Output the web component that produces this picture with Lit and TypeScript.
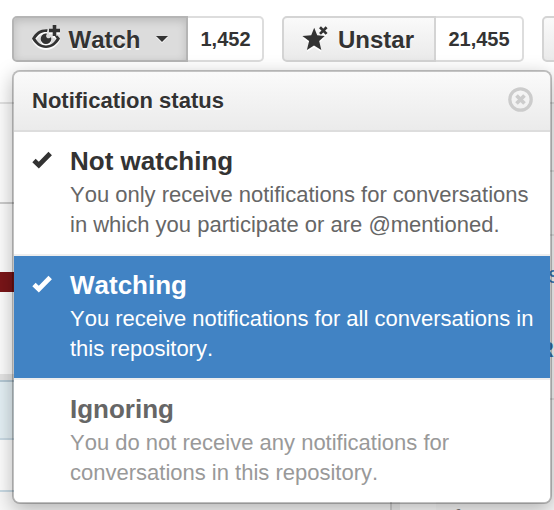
import { LitElement, html, css, svg, nothing } from "lit";
import { customElement, property } from "lit/decorators.js";
import { classMap } from "lit/directives/class-map.js";

const eye = html`<svg width="29" height="25" viewBox="0 0 29 25" fill="currentColor">
  <path fill-rule="evenodd" d="M0 13.600C3.200 7.300 8 4.200 14.400 4.200l1.200.1-.6 2.700-1-.1C9.400 6.900 6 9.600 3.400 13.600c2.600 4.500 6.200 6.900 10.600 6.900s8-2.400 10.600-6.900l-1.700-2.400 2.500-.8 2.600 3.200c-3.200 6-8 9.400-14 9.400S3.200 19.600 0 13.600z"/>
  <path d="M13.600 8.500a5.300 5.300 0 1 0 5.700 5.700c0-.9-.2-1.600-.5-2.300-1 1.900-3.800 1.900-4.400.1-.4-1.300-.2-2.600.7-3.300-.5-.2-1-.2-1.500-.2z"/>
  <path d="M20.700 0h3.600v3.800H28v3.500h-3.700V11h-3.600V7.300H17V3.800h3.700z"/></svg>`;

const star = html`<svg width="26" height="25" viewBox="0 0 26 25" fill="currentColor">
  <path d="M12.200 1.700l3 7.600 7.500.6-5.500 5.200 2.100 8.800-7.300-4.300-7.100 4.300 2.200-8.800L.4 10l8.800-.7z"/>
  <path d="M18 1.300l6.600 6.600M24.600 1.300L18 7.900" stroke="currentColor" stroke-width="2.700" fill="none"/></svg>`;

const check = html`<svg width="22" height="18" viewBox="0 0 22 18"><path d="M2 9.500l4.800 4.700L18.200 2.500" fill="none" stroke="currentColor" stroke-width="4.800"/></svg>`;

@customElement("social-button")
class SocialButton extends LitElement {
  @property() label = "";
  @property() count = "";
  @property() icon = "";
  @property({ type: Boolean }) active = false;
  static styles = css`
    :host { display: flex; height: 46px; box-sizing: border-box; flex: none; }
    * { box-sizing: border-box; }
    .button { display: flex; align-items: center; height: 46px; border: 2px solid #d4d4d4; border-radius: 5px 0 0 5px;
      background: linear-gradient(#fafafa, #eaeaea); color: #333; font-weight: bold; font-size: 24px; text-shadow: 0 2px 0 rgba(255,255,255,.9); }
    .button svg { filter: drop-shadow(0 2px 0 rgba(255,255,255,.9)); display: block; }
    .watch { width: 176px; padding-left: 18px; }
    .watch svg { margin-top: -4px; }
    .star { width: 154px; padding-left: 18px; }
    .star svg { margin-top: -1px; }
    .label { padding-top: 1px; }
    .active { background: #dcdcdc; border-color: #b5b5b5; box-shadow: inset 0 3px 8px rgba(0,0,0,.15); }
    .watch .label { margin-left: 7.500px; }
    .star .label { margin-left: 10px; }
    .caret { width: 0; height: 0; margin-left: 15.500px; border: 6px solid transparent; border-top-color: #333; border-bottom: 0; filter: drop-shadow(0 1px 0 #fff); }
    .count { display: flex; align-items: center; justify-content: center; height: 46px; border: 2px solid #ddd; border-left: 0;
      border-radius: 0 5px 5px 0; background: #fff; color: #333; font-size: 20px; font-weight: bold; }
    .watch + .count { width: 76px; padding-left: 1px; }
    .star + .count { width: 88px; }
  `;
  render() {
    const watch = this.icon === "eye";
    return html`<div class=${classMap({ button: true, watch, star: !watch, active: this.active })}>
        ${watch ? eye : star}<span class="label">${this.label}</span>
        ${watch ? html`<span class="caret"></span>` : nothing}
      </div><div class="count">${this.count}</div>`;
  }
}

@customElement("status-option")
class StatusOption extends LitElement {
  @property() heading = "";
  @property({ attribute: false }) lines: string[] = [];
  @property() kind = "";
  static styles = css`
    :host { display: block; }
    .option { display: grid; grid-template-columns: 38px 1fr; height: 124px; box-sizing: border-box; padding: 13px 0 0 18px;
      background: #fff; color: #333; border-bottom: 2px solid #eee; }
    .option svg { display: block; margin-top: 6px; }
    .title { font-size: 26px; line-height: 32px; font-weight: bold; }
    .text { font-size: 22px; line-height: 30px; color: #666; white-space: nowrap; padding-top: 3px; }
    .selected { background: #4183c4; color: #fff; }
    .selected .text { color: #fff; }
    .muted { height: 122px; border: 0; color: #666; }
    .muted .text { color: #999; }
  `;
  render() {
    return html`<div class="option ${this.kind}"><div>${this.kind === "muted" ? nothing : check}</div>
      <div><div class="title">${this.heading}</div><div class="text">${this.lines.map((l) => html`<div>${l}</div>`)}</div></div></div>`;
  }
}

@customElement("app-root")
class AppRoot extends LitElement {
  static styles = css`
    :host { display: block; position: relative; width: 554px; height: 510px; overflow: hidden; background: #fff;
      font-family: "Liberation Sans", Arial, sans-serif; font-kerning: none; }
    * { box-sizing: border-box; }
    .bar { display: flex; gap: 18px; padding: 16px 0 0 12px; height: 102px; align-items: flex-start; }
    .next { flex: none; width: 60px; height: 46px; border: 2px solid #d4d4d4; border-radius: 5px; background: linear-gradient(#fafafa, #eaeaea); }
    .page { display: flex; justify-content: space-between; height: 408px; border-top: 2px solid #e2e2e2; background: #fdfdfd; }
    .left { width: 390px; }
    .a { height: 100px; border-bottom: 2px solid #ccc; }
    .b { height: 68px; }
    .red { height: 20px; background: #7a1518; }
    .c { height: 82px; }
    .d { height: 6px; background: #e4e4e4; }
    .blue { height: 60px; background: #e4f0f5; border: solid #b5c9d5; border-width: 2px 0; border-bottom-color: #c9dae4; }
    .e { height: 52px; border-bottom: 2px solid #c9dae4; }
    .f { height: 18px; background: #f8f8f8; }
    .rule { width: 10px; border-left: 2px solid #d0d0d0; background: #eee; }
    .gap { width: 36px; }
    .right { width: 118px; background: #f8f8f8; color: #4183c4; font-size: 22px; text-align: right; }
    .right div { border-bottom: 2px solid #e2e2e2; }
    .r1 { height: 68px; }
    .r2 { height: 64px; }
    .r3 { height: 164px; padding: 26px 0 0; line-height: 26px; }
    .r3 span { display: block; height: 75px; margin-right: -6px; font-size: 24px; }
    .r3 b { display: block; margin-right: 0; }
    .right .r4 { padding: 106px 0 0 18px; text-align: left; color: #777; line-height: 24px; border: 0; }
    .panel { position: absolute; left: 12px; top: 70px; width: 540px; height: 434px; border: 2px solid rgba(0,0,0,.23);
      background: #fff; background-clip: padding-box; border-radius: 8px; box-shadow: 0 6px 20px rgba(0,0,0,.28); }
    .clip { overflow: hidden; border-radius: 6px; }
    .head { display: flex; align-items: center; justify-content: space-between; height: 60px; padding: 0 17px 0 18px;
      border-bottom: 2px solid #ddd; background: linear-gradient(#fafafa, #ebebeb); color: #333;
      font-size: 22px; font-weight: bold; text-shadow: 0 2px 0 rgba(255,255,255,.8); }
    .close { margin-top: -4px; }
  `;
  render() {
    return html`
      <div class="bar">
        <social-button icon="eye" label="Watch" count="1,452" active></social-button>
        <social-button icon="star" label="Unstar" count="21,455"></social-button>
        <div class="next"></div>
      </div>
      <div class="page">
        <div class="left"><div class="a"></div><div class="b"></div><div class="red"></div><div class="c"></div><div class="d"></div><div class="blue"></div><div class="e"></div><div class="f"></div></div>
        <div class="rule"></div><div class="gap"></div>
        <div class="right"><div class="r1"></div><div class="r2"></div><div class="r3"><span>s</span><b>R</b></div><div class="r4">f</div></div>
      </div>
      <div class="panel"><div class="clip">
        <div class="head"><span>Notification status</span>
          <svg class="close" width="25" height="25" viewBox="0 0 25 25" fill="none" stroke="#ccc">${svg`<circle cx="12.500" cy="12.500" r="10.700" stroke-width="3.300"/><path d="M8.500 8.500l8 8M16.500 8.500l-8 8" stroke-width="3.700"/>`}</svg>
        </div>
        <status-option heading="Not watching" .lines=${["You only receive notifications for conversations", "in which you participate or are @mentioned."]}></status-option>
        <status-option kind="selected" heading="Watching" .lines=${["You receive notifications for all conversations in", "this repository."]}></status-option>
        <status-option kind="muted" heading="Ignoring" .lines=${["You do not receive any notifications for", "conversations in this repository."]}></status-option>
      </div></div>`;
  }
}
